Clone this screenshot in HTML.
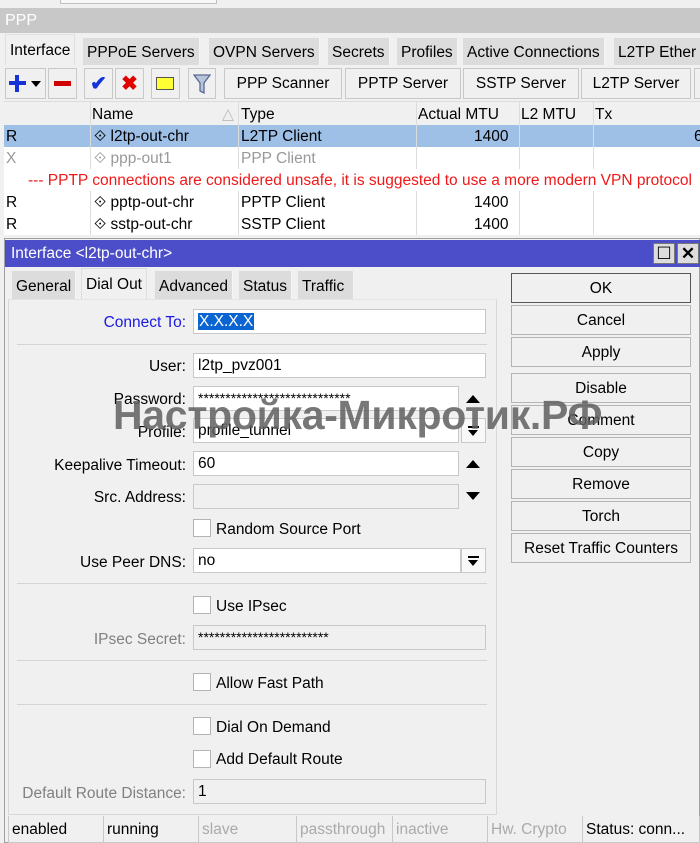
<!DOCTYPE html>
<html><head><meta charset="utf-8"><style>
*{box-sizing:border-box;margin:0;padding:0}
body{width:700px;height:843px;overflow:hidden;background:#f0f0f0;font-family:"Liberation Sans",sans-serif;font-size:15.5px;color:#000;position:relative}
.a{position:absolute}
.tab{position:absolute;top:38px;height:27px;background:#dcdcdc;border-right:1px solid #f4f4f4;padding:6px 4px 0 4px;white-space:nowrap}
.btn{position:absolute;top:68px;height:31px;background:#f0f0f0;border:1px solid #c8c8c8;text-align:center;line-height:30px;white-space:nowrap}
.col{position:absolute;top:101px;height:134px;border-left:1px solid #dcdcdc}
.row{position:absolute;left:4px;width:696px;height:22px;line-height:24px;white-space:nowrap}
.row span{position:absolute}
.rb{position:absolute;left:511px;width:180px;height:30px;border:1px solid #b4b4b4;background:#f0f0f0;text-align:center;line-height:30px}
.lbl{position:absolute;right:514px;text-align:right;white-space:nowrap}
.inp{position:absolute;left:193px;height:25px;background:#fff;border:1px solid #c8c8c8;padding-left:4px;line-height:24px;white-space:nowrap}
.cb{position:absolute;left:193px;width:18px;height:18px;background:#fff;border:1px solid #b4b4b4}
.cbl{position:absolute;left:216px;white-space:nowrap}
.sep{position:absolute;left:17px;width:470px;border-top:1px solid #d4d4d4}
.st{position:absolute;top:816px;height:27px;border:1px solid #c8c8c8;border-top:none;padding-left:3px;line-height:27px;white-space:nowrap;background:#f0f0f0}
.up{position:absolute;left:466px;width:0;height:0;border-left:7px solid transparent;border-right:7px solid transparent}
.dd{position:absolute;left:461px;width:25px;height:25px;border:1px solid #c8c8c8;background:#f8f8f8}
.dd:before{content:"";position:absolute;left:6px;top:7px;width:11px;height:2px;background:#000}
.dd:after{content:"";position:absolute;left:6px;top:11px;border-left:5.5px solid transparent;border-right:5.5px solid transparent;border-top:6px solid #000}
.pw{font-size:14px;line-height:22px}
</style></head><body>
<div class="a" style="left:60px;top:-2px;width:157px;height:6px;border:1px solid #c0c0c0;background:#f8f8f8"></div>
<div class="a" style="left:0;top:8px;width:700px;height:25px;background:#c8c8c8;color:#fff;padding:4px 5px;font-size:16px">PPP</div>
<div class="a" style="left:4px;top:33px;width:696px;height:205px;background:#f0f0f0"></div>
<div class="tab" style="left:5px;top:34px;height:31px;background:#f0f0f0;border:1px solid #e0e0e0;border-bottom:none;padding-top:7px">Interface</div>
<div class="tab" style="left:83px">PPPoE Servers</div>
<div class="tab" style="left:209px">OVPN Servers</div>
<div class="tab" style="left:328px">Secrets</div>
<div class="tab" style="left:397px">Profiles</div>
<div class="tab" style="left:463px">Active Connections</div>
<div class="tab" style="left:614px;width:90px">L2TP Ether</div>
<div class="btn" style="left:5px;width:41px"></div>
<div class="a" style="left:9px;top:81px;width:17px;height:4px;background:#1533d6"></div>
<div class="a" style="left:15px;top:75px;width:4px;height:17px;background:#1533d6"></div>
<div class="a" style="left:31px;top:81px;border-left:5px solid transparent;border-right:5px solid transparent;border-top:6px solid #000"></div>
<div class="btn" style="left:48px;width:29px"></div>
<div class="a" style="left:54px;top:81px;width:17px;height:5px;background:#d00000"></div>
<div class="btn" style="left:84px;width:29px;color:#1533d6;font-weight:bold;font-size:20px">✔</div>
<div class="btn" style="left:115px;width:29px;color:#e00000;font-weight:bold;font-size:20px">✖</div>
<div class="btn" style="left:151px;width:29px"></div>
<div class="a" style="left:156px;top:77px;width:18px;height:13px;background:#ffff33;border:1px solid #555"></div>
<div class="btn" style="left:188px;width:28px"></div>
<svg class="a" style="left:193px;top:73px" width="18" height="22" viewBox="0 0 18 22"><path d="M1 2 H17 L11 10 V20 L7 18 V10 Z" fill="#b8c4dc" stroke="#5a6a90" stroke-width="1.3"/></svg>
<div class="btn" style="left:224px;width:118px">PPP Scanner</div>
<div class="btn" style="left:345px;width:116px">PPTP Server</div>
<div class="btn" style="left:463px;width:116px">SSTP Server</div>
<div class="btn" style="left:581px;width:110px">L2TP Server</div>
<div class="btn" style="left:694px;width:20px"></div>
<div class="a" style="left:4px;top:101px;width:696px;height:24px;background:#f0f0f0;border-top:1px solid #dcdcdc"></div>
<div class="a" style="left:4px;top:125px;width:696px;height:110px;background:#fff"></div>
<div class="a" style="left:4px;top:125px;width:696px;height:22px;background:#9ebfe6"></div>
<div class="col" style="left:90px"></div><div class="col" style="left:238px"></div><div class="col" style="left:416px"></div><div class="col" style="left:519px"></div><div class="col" style="left:593px"></div>
<div class="a" style="left:4px;top:169px;width:696px;height:22px;background:#fff"></div>
<div class="row" style="top:103px"><span style="left:88px">Name</span><span style="left:218px;color:#bbb">△</span><span style="left:237px">Type</span><span style="left:414px">Actual MTU</span><span style="left:517px">L2 MTU</span><span style="left:591px">Tx</span></div>
<div class="row" style="top:125px"><span style="left:2px">R</span><span style="left:90px">⟐ l2tp-out-chr</span><span style="left:237px">L2TP Client</span><span style="left:470px">1400</span><span style="left:690px">6</span></div>
<div class="row" style="top:147px;color:#999"><span style="left:2px">X</span><span style="left:90px">⟐ ppp-out1</span><span style="left:237px">PPP Client</span></div>
<div class="row" style="top:169px;color:#f01818"><span style="left:24px">--- PPTP connections are considered unsafe, it is suggested to use a more modern VPN protocol</span></div>
<div class="row" style="top:191px"><span style="left:2px">R</span><span style="left:90px">⟐ pptp-out-chr</span><span style="left:237px">PPTP Client</span><span style="left:470px">1400</span></div>
<div class="row" style="top:213px"><span style="left:2px">R</span><span style="left:90px">⟐ sstp-out-chr</span><span style="left:237px">SSTP Client</span><span style="left:470px">1400</span></div>
<!-- dialog -->
<div class="a" style="left:4px;top:238px;width:696px;height:605px;background:#f0f0f0;border:1px solid #a0a0a0"></div>
<div class="a" style="left:5px;top:240px;width:695px;height:27px;background:#4b4ec8;color:#fff;padding:5px 6px;font-size:15.5px">Interface &lt;l2tp-out-chr&gt;</div>
<div class="a" style="left:653px;top:243px;width:22px;height:21px;background:#ddd;border:1px solid #777;font-size:17px;text-align:center;line-height:19px">☐</div>
<div class="a" style="left:677px;top:243px;width:22px;height:21px;background:#ddd;border:1px solid #777;font-weight:bold;font-size:17px;text-align:center;line-height:19px">✕</div>
<div class="tab" style="left:12px;top:271px;height:28px;padding-top:7px">General</div>
<div class="tab" style="left:81px;top:268px;height:31px;background:#f0f0f0;border:1px solid #ddd;border-bottom:none;padding-top:7px">Dial Out</div>
<div class="tab" style="left:155px;top:271px;height:28px;padding-top:7px">Advanced</div>
<div class="tab" style="left:239px;top:271px;height:28px;padding-top:7px">Status</div>
<div class="tab" style="left:298px;top:271px;height:28px;width:56px;padding-top:7px">Traffic</div>
<div class="a" style="left:8px;top:299px;width:489px;height:516px;border:1px solid #d8d8d8;border-top-color:#e4e4e4"></div>
<div class="rb" style="top:273px;border-color:#555">OK</div>
<div class="rb" style="top:305px">Cancel</div>
<div class="rb" style="top:337px">Apply</div>
<div class="rb" style="top:373px">Disable</div>
<div class="rb" style="top:405px">Comment</div>
<div class="rb" style="top:437px">Copy</div>
<div class="rb" style="top:469px">Remove</div>
<div class="rb" style="top:501px">Torch</div>
<div class="rb" style="top:533px">Reset Traffic Counters</div>
<div class="lbl" style="top:314px;color:#1a1ae0">Connect To:</div>
<div class="inp" style="top:309px;width:293px"><span style="background:#0a64d2;color:#fff;padding:0 1px">X.X.X.X</span></div>
<div class="sep" style="top:344px"></div>
<div class="lbl" style="top:358px">User:</div>
<div class="inp" style="top:353px;width:293px">l2tp_pvz001</div>
<div class="lbl" style="top:391px">Password:</div>
<div class="inp pw" style="top:386px;width:266px">****************************</div>
<div class="up" style="top:395px;border-bottom:8px solid #000"></div>
<div class="lbl" style="top:424px">Profile:</div>
<div class="inp" style="top:418px;width:266px">profile_tunnel</div>
<div class="dd" style="top:418px"></div>
<div class="lbl" style="top:457px">Keepalive Timeout:</div>
<div class="inp" style="top:451px;width:266px">60</div>
<div class="up" style="top:460px;border-bottom:8px solid #000"></div>
<div class="lbl" style="top:489px">Src. Address:</div>
<div class="inp" style="top:484px;width:266px;background:#f0f0f0"></div>
<div class="up" style="top:492px;border-top:8px solid #000"></div>
<div class="cb" style="top:519px"></div><div class="cbl" style="top:521px">Random Source Port</div>
<div class="lbl" style="top:554px">Use Peer DNS:</div>
<div class="inp" style="top:548px;width:268px">no</div>
<div class="dd" style="top:548px"></div>
<div class="sep" style="top:583px"></div>
<div class="cb" style="top:596px"></div><div class="cbl" style="top:598px">Use IPsec</div>
<div class="lbl" style="top:631px;color:#808080">IPsec Secret:</div>
<div class="inp pw" style="top:625px;width:293px;background:#f0f0f0">************************</div>
<div class="sep" style="top:660px"></div>
<div class="cb" style="top:673px"></div><div class="cbl" style="top:675px">Allow Fast Path</div>
<div class="sep" style="top:704px"></div>
<div class="cb" style="top:717px"></div><div class="cbl" style="top:719px">Dial On Demand</div>
<div class="cb" style="top:750px"></div><div class="cbl" style="top:751px">Add Default Route</div>
<div class="lbl" style="top:785px;color:#808080">Default Route Distance:</div>
<div class="inp" style="top:779px;width:293px;background:#f0f0f0">1</div>
<div class="st" style="left:8px;width:96px">enabled</div>
<div class="st" style="left:103px;width:96px">running</div>
<div class="st" style="left:198px;width:99px;color:#aaa">slave</div>
<div class="st" style="left:296px;width:97px;color:#aaa">passthrough</div>
<div class="st" style="left:392px;width:96px;color:#aaa">inactive</div>
<div class="st" style="left:487px;width:96px;color:#aaa">Hw. Crypto</div>
<div class="st" style="left:582px;width:118px">Status: conn...</div>
<div class="a" style="left:113px;top:392px;font-size:41px;font-weight:bold;color:rgba(95,95,95,0.85);white-space:nowrap;letter-spacing:-0.3px">Настройка-Микротик.РФ</div>
</body></html>
